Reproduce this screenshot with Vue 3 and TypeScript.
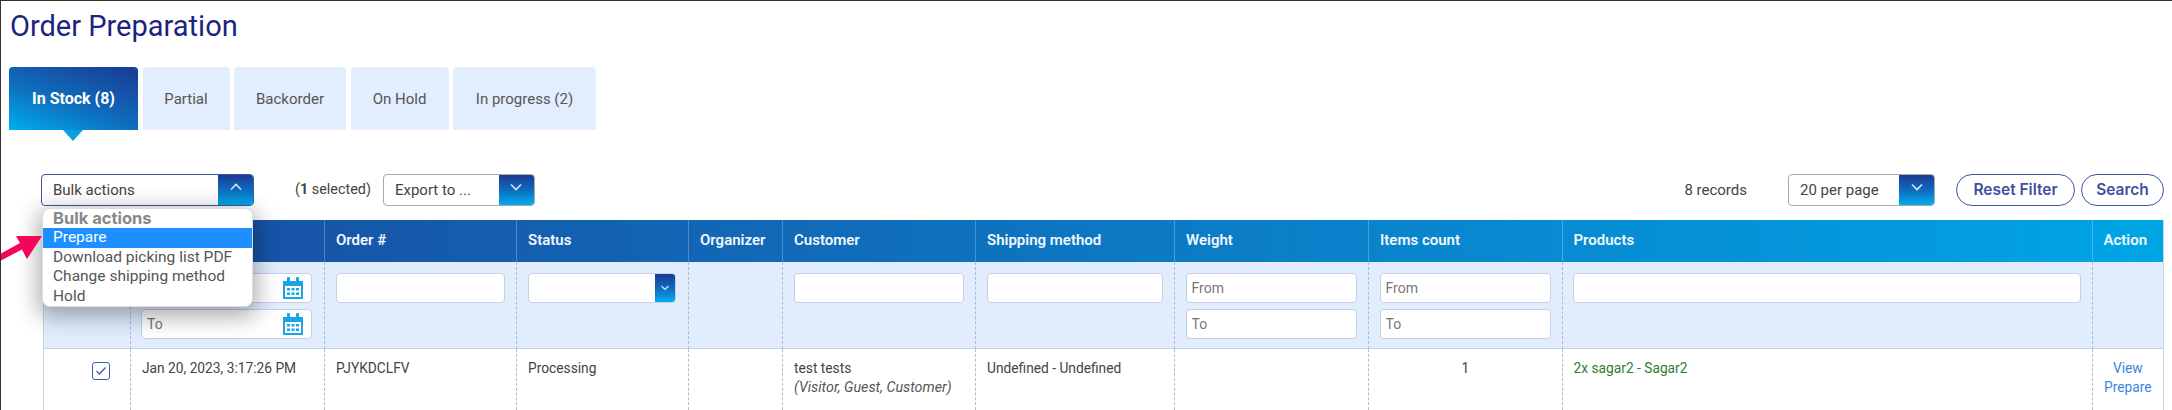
<script setup lang="ts">
const tabs: { label: string; w: number; active?: boolean }[] = [
  { label: 'In Stock (8)', w: 129, active: true },
  { label: 'Partial', w: 87 },
  { label: 'Backorder', w: 112 },
  { label: 'On Hold', w: 98 },
  { label: 'In progress (2)', w: 143 },
]
const cols = [
  { w: 86, h: '' },
  { w: 194, h: '' },
  { w: 192, h: 'Order #' },
  { w: 172, h: 'Status' },
  { w: 94, h: 'Organizer' },
  { w: 193, h: 'Customer' },
  { w: 199, h: 'Shipping method' },
  { w: 194, h: 'Weight' },
  { w: 193.5, h: 'Items count' },
  { w: 530, h: 'Products' },
  { w: 71.5, h: 'Action' },
]
const menu = ['Prepare', 'Download picking list PDF', 'Change shipping method', 'Hold']
</script>

<template>
  <div class="page">
    <h1 class="title">Order Preparation</h1>

    <div class="tabs">
      <div
        v-for="t in tabs"
        :key="t.label"
        class="tab"
        :class="{ active: t.active }"
        :style="{ width: t.w + 'px' }"
      >{{ t.label }}</div>
    </div>

    <div class="toolbar">
      <div class="bulk-wrap">
        <div class="select bulk">
          <span class="select-label">Bulk actions</span>
          <span class="select-btn">
            <svg width="14" height="10" viewBox="0 0 14 10"><path d="M2 7.5 7 2.5l5 5" fill="none" stroke="#d8e6f5" stroke-width="1.6" /></svg>
          </span>
        </div>
        <div class="menu">
          <div class="menu-head">Bulk actions</div>
          <div v-for="(m, i) in menu" :key="m" class="menu-item" :class="{ hi: i === 0 }">{{ m }}</div>
        </div>
      </div>
      <span class="selected">(<b>1</b> selected)</span>
      <div class="select export">
        <span class="select-label">Export to ...</span>
        <span class="select-btn">
          <svg width="14" height="10" viewBox="0 0 14 10"><path d="M2 2.5 7 7.5l5-5" fill="none" stroke="#d8e6f5" stroke-width="1.6" /></svg>
        </span>
      </div>
      <span class="spacer"></span>
      <span class="records">8 records</span>
      <div class="select perpage">
        <span class="select-label">20 per page</span>
        <span class="select-btn">
          <svg width="14" height="10" viewBox="0 0 14 10"><path d="M2 2.5 7 7.5l5-5" fill="none" stroke="#d8e6f5" stroke-width="1.6" /></svg>
        </span>
      </div>
      <button class="pill reset">Reset Filter</button>
      <button class="pill search">Search</button>
    </div>

    <svg class="arrow" width="44" height="30" viewBox="0 0 44 30">
      <path d="M0 26 L22 14.5 L27 24 L42 1 L16 1 L20 8 L0 19 Z" fill="#f5045c" />
    </svg>

    <table class="grid">
      <colgroup>
        <col v-for="(c, i) in cols" :key="i" :style="{ width: c.w + 'px' }" />
      </colgroup>
      <thead>
        <tr class="head">
          <th v-for="(c, i) in cols" :key="i"><span class="th-text">{{ c.h }}</span></th>
        </tr>
      </thead>
      <tbody>
        <tr class="filters">
          <td></td>
          <td class="date-cell">
            <div class="stack">
              <div class="date"><input class="inp" placeholder="From" /><svg class="cal" width="22" height="24" viewBox="0 0 22 24"><g fill="#1ba5e8"><rect x="5" y="1" width="3" height="5" rx="1" /><rect x="14" y="1" width="3" height="5" rx="1" /><path d="M1 5h20v18H1zM3 10v11h16V10z" fill-rule="evenodd" /><rect x="5" y="12" width="3" height="2.5" /><rect x="9.5" y="12" width="3" height="2.5" /><rect x="14" y="12" width="3" height="2.5" /><rect x="5" y="16.5" width="3" height="2.5" /><rect x="9.5" y="16.5" width="3" height="2.5" /><rect x="14" y="16.5" width="3" height="2.5" /></g></svg></div>
              <div class="date"><input class="inp" placeholder="To" /><svg class="cal" width="22" height="24" viewBox="0 0 22 24"><g fill="#1ba5e8"><rect x="5" y="1" width="3" height="5" rx="1" /><rect x="14" y="1" width="3" height="5" rx="1" /><path d="M1 5h20v18H1zM3 10v11h16V10z" fill-rule="evenodd" /><rect x="5" y="12" width="3" height="2.5" /><rect x="9.5" y="12" width="3" height="2.5" /><rect x="14" y="12" width="3" height="2.5" /><rect x="5" y="16.5" width="3" height="2.5" /><rect x="9.5" y="16.5" width="3" height="2.5" /><rect x="14" y="16.5" width="3" height="2.5" /></g></svg></div>
            </div>
          </td>
          <td><div class="stack"><input class="inp" /></div></td>
          <td class="status-cell">
            <div class="stack">
              <div class="status">
                <span class="status-btn"><svg width="10" height="8" viewBox="0 0 10 8"><path d="M1.5 2 5 5.5 8.5 2" fill="none" stroke="#d8e6f5" stroke-width="1.2" /></svg></span>
              </div>
            </div>
          </td>
          <td></td>
          <td><div class="stack"><input class="inp" /></div></td>
          <td><div class="stack"><input class="inp" /></div></td>
          <td><div class="stack"><input class="inp" placeholder="From" /><input class="inp" placeholder="To" /></div></td>
          <td><div class="stack"><input class="inp" placeholder="From" /><input class="inp" placeholder="To" /></div></td>
          <td><div class="stack"><input class="inp" /></div></td>
          <td></td>
        </tr>
        <tr class="row">
          <td class="check-cell">
            <span class="check"><svg width="12" height="10" viewBox="0 0 12 10"><path d="M1.5 5 4.5 8 10.5 1.5" fill="none" stroke="#3f5fae" stroke-width="1.3" /></svg></span>
          </td>
          <td>Jan 20, 2023, 3:17:26 PM</td>
          <td>PJYKDCLFV</td>
          <td>Processing</td>
          <td></td>
          <td>test tests<br /><i>(Visitor, Guest, Customer)</i></td>
          <td>Undefined - Undefined</td>
          <td></td>
          <td class="center">1</td>
          <td class="green">2x sagar2 - Sagar2</td>
          <td class="center link">View<br />Prepare</td>
        </tr>
      </tbody>
    </table>
  </div>
</template>

<style scoped>
.page {
  position: relative;
  box-sizing: border-box;
  width: 2172px;
  height: 410px;
  overflow: hidden;
  border-top: 1px solid #333;
  border-left: 1px solid #333;
  background: #fff;
  font-family: Roboto, "Liberation Sans", sans-serif;
  font-size: 14px;
  color: #444;
}
.title {
  margin: 0;
  padding: 7px 0 0 9px;
  height: 59px;
  box-sizing: border-box;
  font-size: 29px;
  font-weight: 400;
  line-height: 36px;
  color: #1b2580;
}
.tabs {
  display: flex;
  padding-left: 8px;
  padding-top: 7px;
  gap: 4.5px;
}
.tab {
  position: relative;
  height: 63px;
  box-sizing: border-box;
  display: flex;
  align-items: center;
  justify-content: center;
  background: #e2eefe;
  border-radius: 4px 4px 0 0;
  font-size: 15px;
  color: #555;
}
.tab.active {
  background: linear-gradient(200deg, #1a3a94 0%, #0f6cbc 55%, #00aeef 100%);
  color: #fff;
  font-size: 16px;
  font-weight: 700;
}
.tab.active::after {
  content: "";
  position: absolute;
  left: 54px;
  bottom: -11px;
  border-left: 10px solid transparent;
  border-right: 10px solid transparent;
  border-top: 11px solid #0ba0e2;
}
.toolbar {
  display: flex;
  align-items: center;
  height: 33px;
  margin-top: 43px;
  padding-left: 40px;
  padding-right: 8px;
}
.bulk-wrap {
  position: relative;
  z-index: 3;
}
.select {
  display: flex;
  box-sizing: border-box;
  height: 32px;
  border: 1px solid #aaa;
  border-radius: 4px;
  overflow: hidden;
  font-size: 15px;
  color: #444;
  background: #fff;
}
.select-label {
  flex: 1;
  display: flex;
  align-items: center;
  padding-left: 11px;
  white-space: nowrap;
}
.select-btn {
  width: 35px;
  display: flex;
  align-items: flex-start;
  padding-top: 7px;
  box-sizing: border-box;
  justify-content: center;
  background: linear-gradient(180deg, #1a3a94 0%, #0d71c2 55%, #00aeef 100%);
}
.bulk {
  width: 213px;
  border-color: #3f56a8;
}
.menu {
  position: absolute;
  left: 1px;
  top: 34px;
  width: 211px;
  box-sizing: border-box;
  height: 99px;
  background: #fff;
  border-radius: 8px;
  border: 1px solid #ddd;
  box-shadow: 0 6px 22px 4px rgba(0, 0, 0, 0.32);
  overflow: hidden;
  font-size: 15.5px;
  line-height: 19.5px;
  color: #555;
}
.menu-head {
  padding-left: 10px;
  font-family: Inter, Roboto, sans-serif;
  font-weight: 700;
  font-size: 16.5px;
  line-height: 19px;
  color: #888;
}
.menu-item {
  padding-left: 10px;
}
.menu-item.hi {
  background: #1e8fff;
  color: #fff;
  height: 20px;
}
.selected {
  margin-left: 41px;
  font-size: 14.4px;
}
.export {
  width: 152px;
  margin-left: 12px;
}
.spacer {
  flex: 1;
}
.records {
  font-size: 15px;
  margin-right: 41px;
}
.perpage {
  width: 147px;
  margin-right: 21px;
}
.pill {
  height: 32px;
  box-sizing: border-box;
  border: 1.5px solid #3f56a8;
  border-radius: 16px;
  background: #fff;
  color: #3f4f9e;
  font-family: Inter, Roboto, sans-serif;
  font-weight: 600;
  font-size: 15.5px;
  padding: 0;
}
.reset {
  width: 119px;
  margin-right: 6px;
}
.search {
  width: 83px;
}
.arrow {
  position: absolute;
  left: -1px;
  top: 234px;
  z-index: 4;
}
.grid {
  margin: 14px 0 0 42px;
  width: 2119px;
  table-layout: fixed;
  border-collapse: separate;
  border-spacing: 0;
  border-right: 1px solid #c6d4e8;
  border-left: 1px solid #c6d4e8;
}
.head {
  height: 42px;
  background: linear-gradient(90deg, #1a4a9f 0%, #00a5e6 100%);
}
.head th {
  padding: 0 0 0 11px;
  text-align: left;
  font-weight: 600;
  font-size: 15px;
  color: #f2f7fd;
  border-left: 1px solid rgba(255, 255, 255, 0.25);
  white-space: nowrap;
  overflow: hidden;
}
.th-text {
  position: relative;
  top: -1px;
}
.head th:first-child {
  border-left: 0;
  border-radius: 4px 0 0 0;
}
.filters {
  height: 87px;
  background: #e1edfd;
}
.filters td {
  vertical-align: top;
  padding: 11px 11px 0 10.5px;
  border-left: 1px dashed #a9bcd8;
  border-bottom: 1px solid #bccde6;
  box-sizing: border-box;
}
.filters td.date-cell {
  padding: 11px 12px 0 10px;
}
.filters td.status-cell {
  padding-left: 11px;
}
.filters td:first-child,
.row td:first-child {
  border-left: 0;
}
.stack {
  display: flex;
  flex-direction: column;
  gap: 6px;
}
.inp {
  box-sizing: border-box;
  width: 100%;
  height: 30px;
  border: 1px solid #c3d1e8;
  border-radius: 4px;
  background: #fff;
  padding: 0 5px;
  font-family: Roboto, sans-serif;
  font-size: 14px;
  outline: none;
}
.inp::placeholder {
  color: #777;
}
.date {
  position: relative;
}
.cal {
  position: absolute;
  right: 8px;
  top: 3px;
}
.status {
  display: flex;
  justify-content: flex-end;
  height: 30px;
  box-sizing: border-box;
  width: 148px;
  border: 1px solid #c3d1e8;
  border-radius: 4px;
  background: #fff;
  overflow: hidden;
}
.status-btn {
  width: 20px;
  display: flex;
  align-items: center;
  justify-content: center;
  background: linear-gradient(180deg, #1a3a94 0%, #0d71c2 55%, #00aeef 100%);
}
.row td {
  vertical-align: top;
  height: 61px;
  box-sizing: border-box;
  padding: 10px 0 0 11px;
  border-left: 1px dashed #a9bcd8;
  line-height: 19px;
  font-size: 13.75px;
  color: #444;
}
.row i {
  color: #555;
  font-size: 14.3px;
}
.row td.center {
  text-align: center;
  padding-left: 0;
}
.row td.green {
  color: #2e7d32;
}
.row td.link {
  color: #3d84e6;
}
.row td.check-cell {
  padding: 13px 0 0 48px;
}
.check {
  display: flex;
  align-items: center;
  justify-content: center;
  box-sizing: border-box;
  width: 18px;
  height: 18px;
  border: 1.5px solid #3f5fae;
  border-radius: 3px;
}
</style>
